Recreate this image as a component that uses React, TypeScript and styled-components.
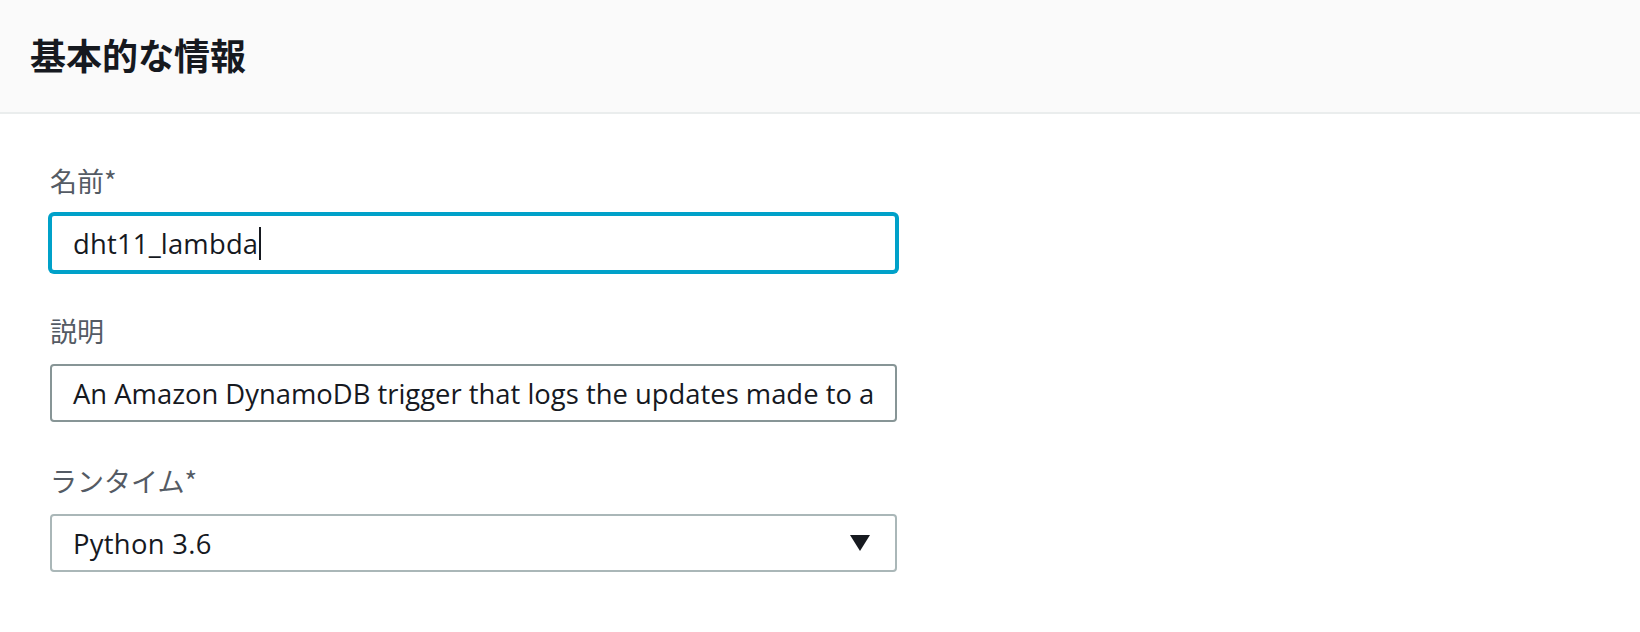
import React from "react";
import styled, { createGlobalStyle } from "styled-components";

const GlobalStyle = createGlobalStyle`
  html, body {
    margin: 0;
    padding: 0;
    background: #ffffff;
  }
  body {
    font-family: "Open Sans", "Noto Sans CJK JP", sans-serif;
    color: #16191f;
  }
`;

const Page = styled.div`
  width: 1640px;
  height: 632px;
  background: #ffffff;
  display: flex;
  flex-direction: column;
`;

const Header = styled.header`
  height: 112px;
  background: #fafafa;
  border-bottom: 2px solid #eaeded;
  display: flex;
  align-items: center;
  padding-left: 30px;
  box-sizing: content-box;
`;

const Title = styled.h2`
  margin: 0;
  font-family: "Noto Sans CJK JP", sans-serif;
  font-weight: 700;
  font-size: 36px;
  line-height: 1;
  color: #16191f;
  transform: translateY(-2px);
`;

const Form = styled.div`
  display: flex;
  flex-direction: column;
  gap: 36px;
  padding: 44px 0 0 50px;
`;

const Field = styled.div`
  display: flex;
  flex-direction: column;
  gap: 11px;
`;

const Label = styled.label`
  font-family: "Noto Sans CJK JP", sans-serif;
  font-size: 27px;
  line-height: 45px;
  height: 45px;
  color: #545b64;
  display: flex;
  align-items: center;
`;

const Box = styled.div<{ $focused?: boolean; $border?: string }>`
  position: relative;
  width: 847px;
  height: 58px;
  box-sizing: border-box;
  border: 2px solid ${(p) => (p.$focused ? "#00a1c9" : p.$border || "#aab7b8")};
  border-radius: 4px;
  box-shadow: ${(p) => (p.$focused ? "0 0 0 2px #00a1c9" : "none")};
  background: #ffffff;
  display: flex;
  align-items: center;
  padding: 0 20px 0 21px;
  font-family: "Open Sans", sans-serif;
  font-size: 27.4px;
  color: #16191f;
  white-space: nowrap;
  overflow: hidden;
`;

const Caret = styled.span`
  display: inline-block;
  width: 2px;
  height: 33px;
  background: #16191f;
  margin-left: 1px;
`;

const Value = styled.span<{ $spacing?: string }>`
  flex: 1;
  display: flex;
  align-items: center;
  letter-spacing: ${(p) => p.$spacing || "0"};
`;

const Arrow = styled.svg`
  width: 20px;
  height: 16px;
  margin-right: 5px;
  flex-shrink: 0;
`;

export default function App() {
  return (
    <>
      <GlobalStyle />
      <Page>
        <Header>
          <Title>基本的な情報</Title>
        </Header>
        <Form>
          <Field>
            <Label>名前*</Label>
            <Box $focused>
              <Value $spacing="0.2px">
                dht11_lambda
                <Caret />
              </Value>
            </Box>
          </Field>
          <Field>
            <Label>説明</Label>
            <Box $border="#879596">
              <Value>An Amazon DynamoDB trigger that logs the updates made to a</Value>
            </Box>
          </Field>
          <Field>
            <Label>ランタイム*</Label>
            <Box>
              <Value $spacing="0.3px">Python 3.6</Value>
              <Arrow viewBox="0 0 20 16">
                <path d="M0 0 H20 L10 16 Z" fill="#16191f" />
              </Arrow>
            </Box>
          </Field>
        </Form>
      </Page>
    </>
  );
}
